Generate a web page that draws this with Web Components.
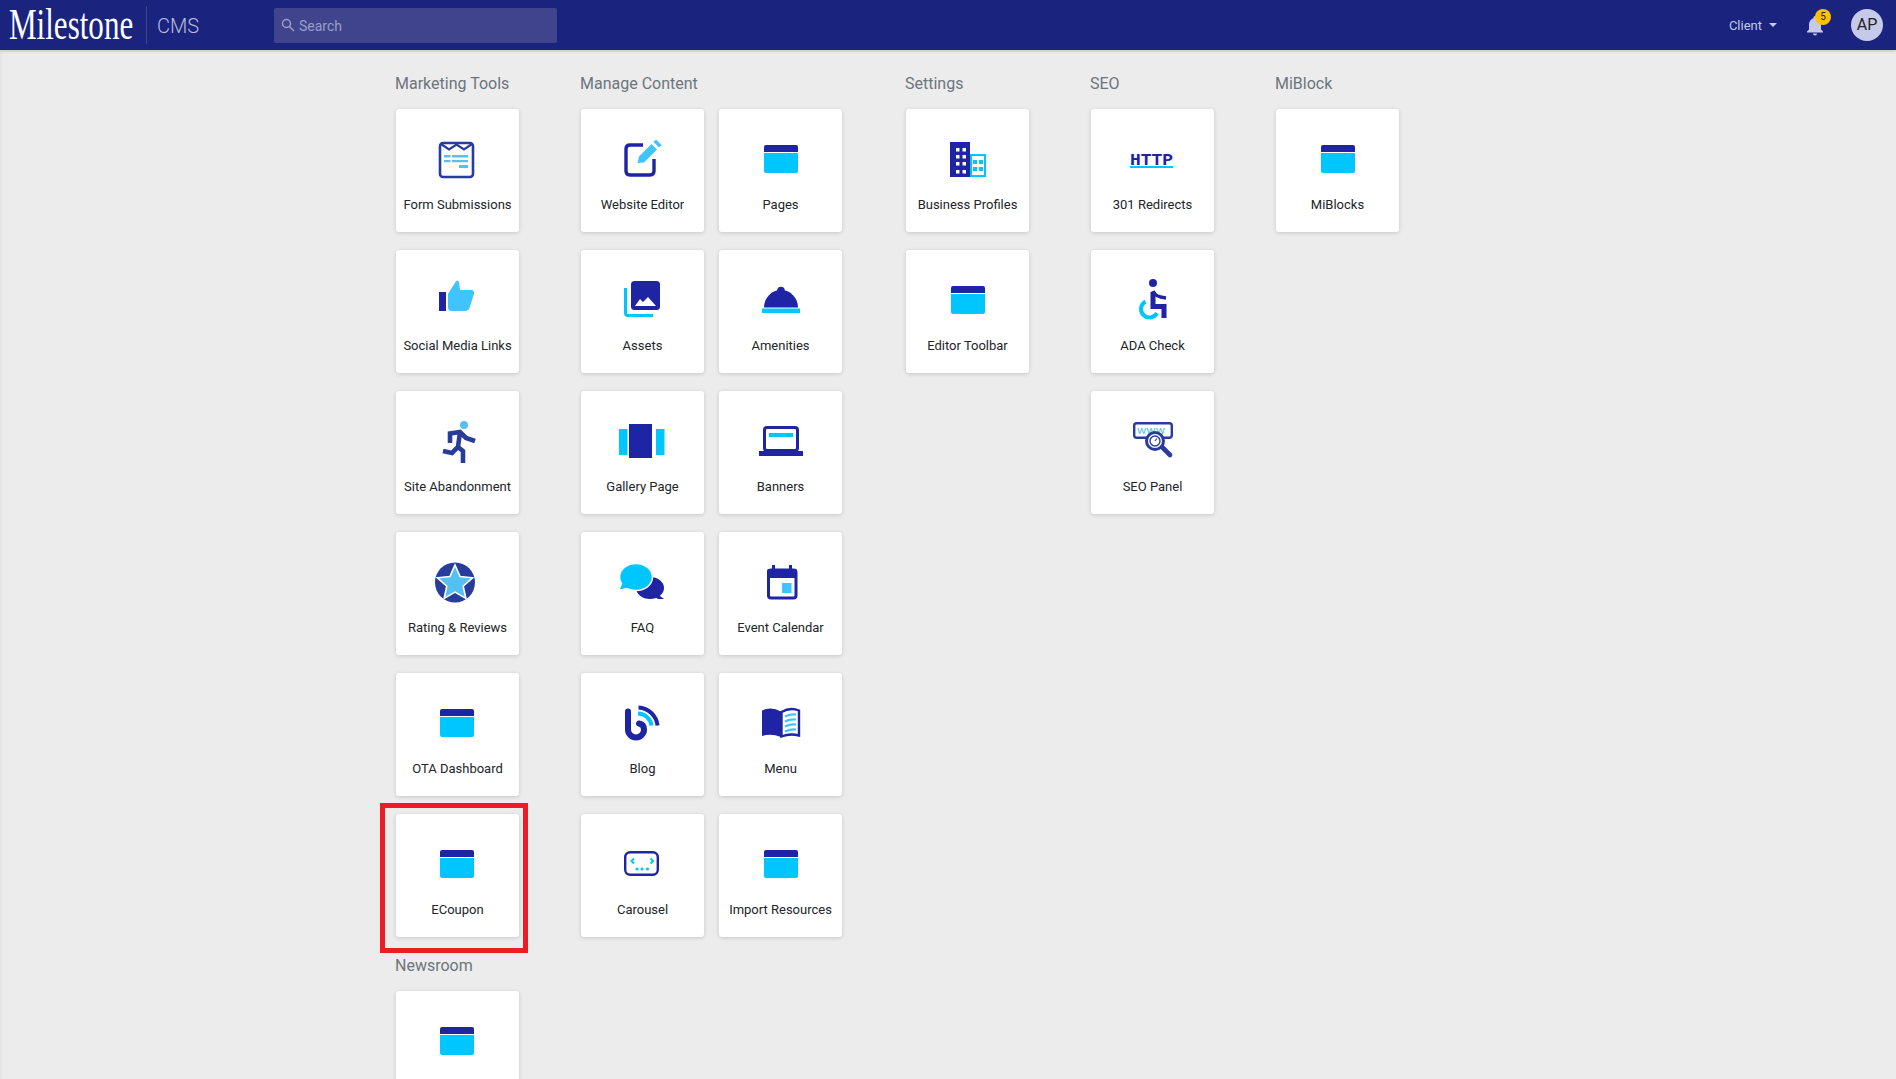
<!DOCTYPE html>
<html lang="en">
<head>
<meta charset="utf-8">
<title>Milestone CMS</title>
<style>
    html, body { margin: 0; height: 100%; overflow: hidden; background: #ececec; }
    body { font-family: Roboto, "Liberation Sans", sans-serif; }
</style>
</head>
<body>
<app-header></app-header>
<app-main>
    <menu-column>
        <menu-group title="Marketing Tools">
            <menu-card label="Form Submissions" icon="form"></menu-card>
            <menu-card label="Social Media Links" icon="thumb"></menu-card>
            <menu-card label="Site Abandonment" icon="runner"></menu-card>
            <menu-card label="Rating &amp; Reviews" icon="star"></menu-card>
            <menu-card label="OTA Dashboard" icon="windowLeft"></menu-card>
            <menu-card label="ECoupon" icon="windowLeft" highlight></menu-card>
        </menu-group>
        <menu-group title="Newsroom">
            <menu-card icon="windowLeft"></menu-card>
        </menu-group>
    </menu-column>
    <menu-column wide>
        <menu-group title="Manage Content" cols="2">
            <menu-card label="Website Editor" icon="editor"></menu-card>
            <menu-card label="Pages" icon="window"></menu-card>
            <menu-card label="Assets" icon="assets"></menu-card>
            <menu-card label="Amenities" icon="dome"></menu-card>
            <menu-card label="Gallery Page" icon="gallery"></menu-card>
            <menu-card label="Banners" icon="laptop"></menu-card>
            <menu-card label="FAQ" icon="faq"></menu-card>
            <menu-card label="Event Calendar" icon="calendar"></menu-card>
            <menu-card label="Blog" icon="blog"></menu-card>
            <menu-card label="Menu" icon="book"></menu-card>
            <menu-card label="Carousel" icon="carousel"></menu-card>
            <menu-card label="Import Resources" icon="window"></menu-card>
        </menu-group>
    </menu-column>
    <menu-column>
        <menu-group title="Settings">
            <menu-card label="Business Profiles" icon="building"></menu-card>
            <menu-card label="Editor Toolbar" icon="window"></menu-card>
        </menu-group>
    </menu-column>
    <menu-column>
        <menu-group title="SEO">
            <menu-card label="301 Redirects" icon="http"></menu-card>
            <menu-card label="ADA Check" icon="ada"></menu-card>
            <menu-card label="SEO Panel" icon="seo"></menu-card>
        </menu-group>
    </menu-column>
    <menu-column>
        <menu-group title="MiBlock">
            <menu-card label="MiBlocks" icon="window"></menu-card>
        </menu-group>
    </menu-column>
</app-main>

<script>
const DARK = '#1e24a3';
const NAVY = '#283c9e';
const CYAN = '#00c6ff';
const SKY = '#40c4ff';
const PALE = '#55c1f2';

const windowIcon = x => `
    <path d="M${x} 22v-5a2 2 0 0 1 2-2h30a2 2 0 0 1 2 2v5z" fill="${DARK}"/>
    <path d="M${x} 23h34v18a2 2 0 0 1-2 2h-30a2 2 0 0 1-2-2z" fill="${CYAN}"/>`;

const starPoints = () => {
    const pts = [];
    for (let i = 0; i < 10; i++) {
        const r = i % 2 ? 8.6 : 18.5;
        const a = -Math.PI / 2 + i * Math.PI / 5;
        pts.push((28 + r * Math.cos(a)).toFixed(1) + ',' + (30.5 + r * Math.sin(a)).toFixed(1));
    }
    return pts.join(' ');
};

// icons are drawn on a 61x60 box, which sits centred at the top of the card
const ICONS = {
    window: windowIcon(14),
    windowLeft: windowIcon(13),
    form: `
        <rect x="13" y="13" width="33" height="34" rx="3" fill="#fff" stroke="${NAVY}" stroke-width="2.6"/>
        <path d="M14 14l8 5.5 7.5-5 7.5 5 8-5.5" fill="none" stroke="${NAVY}" stroke-width="2.2"/>
        <path d="M17 25h6.500v2.600h-6.500zM25 25h16v2.600h-16zM17 30h6.500v2.300h-6.500zM25 30h16v2.300h-16zM32 35h9v3h-9z" fill="${PALE}"/>`,
    thumb: `
        <rect x="12" y="21" width="7" height="19" fill="${DARK}"/>
        <path d="M21 23L28.500 11Q30.500 8 32 11L33 19H44Q47.500 19 47 23L42.500 37Q41.500 40 38 40H25Q21 40 21 36Z" fill="${SKY}"/>`,
    runner: `
        <circle cx="37" cy="13" r="4" fill="${PALE}"/>
        <path d="M23 31V21.500L33 20L39 26L48 29M33 20L31 35L25 41L16 39M31 35L36 39V51" fill="none" stroke="${NAVY}" stroke-width="4.6" stroke-linejoin="miter"/>`,
    star: `
        <circle cx="28" cy="29.500" r="20" fill="${NAVY}"/>
        <polygon points="${starPoints()}" fill="${PALE}" stroke="#fff" stroke-width="1.600"/>`,
    editor: `
        <path d="M31 15H18Q14 15 14 19V41Q14 45 18 45H38Q42 45 42 41V29" fill="none" stroke="${DARK}" stroke-width="3.400"/>
        <path d="M25.500 33L27 26.500L39.500 14L45 19.500L32 32.500Z" fill="${SKY}"/>
        <path d="M41.500 12L44 9.500L49.500 15L47 17.500Z" fill="${SKY}"/>`,
    assets: `
        <rect x="19" y="10" width="29" height="29" rx="3.500" fill="${DARK}"/>
        <path d="M23 35L28 28L31 31L36 26L44 35Z" fill="#fff"/>
        <path d="M13.500 17V42Q13.500 44.500 16 44.500H41" fill="none" stroke="${CYAN}" stroke-width="3"/>`,
    dome: `
        <circle cx="31" cy="19.500" r="3.800" fill="${DARK}"/>
        <path d="M14 36.500a17 17.500 0 0 1 34 0z" fill="${DARK}"/>
        <rect x="12" y="37.500" width="38" height="4.500" fill="${CYAN}"/>`,
    gallery: `
        <rect x="17" y="12" width="23" height="34" fill="${DARK}"/>
        <rect x="7" y="17" width="8.500" height="26" fill="${CYAN}"/>
        <rect x="44" y="17" width="8.500" height="26" fill="${CYAN}"/>`,
    laptop: `
        <rect x="14.500" y="15.500" width="33" height="23" rx="2.500" fill="none" stroke="${DARK}" stroke-width="3"/>
        <rect x="9" y="39" width="44" height="5" fill="${DARK}"/>
        <rect x="19" y="21" width="24" height="4" fill="${CYAN}"/>`,
    faq: `
        <ellipse cx="38" cy="35" rx="14" ry="11" fill="${DARK}"/>
        <path d="M44 40L52 46L46 46L40 42Z" fill="${DARK}"/>
        <path d="M8 36L12 31L18 34Z" fill="${CYAN}"/>
        <ellipse cx="24" cy="24" rx="16.500" ry="13.500" fill="${CYAN}" stroke="#fff" stroke-width="1.500"/>
        <path d="M8 36L11 29L17 34.500Z" fill="${CYAN}"/>`,
    calendar: `
        <rect x="18.500" y="17" width="27.500" height="28" rx="2.500" fill="#fff" stroke="${DARK}" stroke-width="3"/>
        <rect x="17" y="16" width="30" height="9" rx="2" fill="${DARK}"/>
        <rect x="22" y="12" width="3" height="5" fill="${DARK}"/>
        <rect x="39" y="12" width="3" height="5" fill="${DARK}"/>
        <rect x="32" y="30" width="9.500" height="10" fill="${SKY}"/>`,
    blog: `
        <g transform="translate(0 -1.500)">
        <path d="M16 19V37A8 8 0 0 0 32 37C32 33.500 30 31.500 27 31" fill="none" stroke="${DARK}" stroke-width="6" stroke-linecap="round"/>
        <path d="M26 21A14 14 0 0 1 39.500 33" fill="none" stroke="${CYAN}" stroke-width="4"/>
        <path d="M26.500 15A20 20 0 0 1 45.500 33" fill="none" stroke="${DARK}" stroke-width="4"/>
        </g>`,
    book: `
        <path d="M12 16.500Q21 12 31 17.500V43Q21 39 12 42Z" fill="${DARK}"/>
        <path d="M31.500 18Q40 13 49 16.500V41.500Q40 39 31.500 42.500Z" fill="#fff" stroke="${DARK}" stroke-width="2.400"/>
        <path d="M35 22.500Q40 20 46 20.500M35 27.500Q40 25 46 25.500M35 32.500Q40 30 46 30.500M35 37.500Q40 35 46 35.500" fill="none" stroke="${SKY}" stroke-width="2.200"/>`,
    carousel: `
        <rect x="13.200" y="17.200" width="32.600" height="22.600" rx="5" fill="none" stroke="${DARK}" stroke-width="2.400"/>
        <path d="M22 23.500L19.500 26L22 28.500M38.500 23.500L41 26L38.500 28.500" fill="none" stroke="${CYAN}" stroke-width="2"/>
        <circle cx="25" cy="34" r="1.600" fill="${CYAN}"/>
        <circle cx="30" cy="34" r="1.600" fill="${CYAN}"/>
        <circle cx="35.500" cy="34" r="1.600" fill="${CYAN}"/>`,
    building: `
        <rect x="34" y="25" width="14" height="21" fill="#fff" stroke="${CYAN}" stroke-width="2"/>
        <path d="M36 30h4v4h-4zM42 30h4v4h-4zM36 37h4v4h-4zM42 37h4v4h-4z" fill="${CYAN}"/>
        <rect x="13" y="12" width="20" height="35" fill="${DARK}"/>
        <path d="M19 18h3.500v3.500h-3.500zM25.500 18h3.500v3.500h-3.500zM19 25h3.500v3.500h-3.500zM25.500 25h3.500v3.500h-3.500zM19 32h3.500v3.500h-3.500zM25.500 32h3.500v3.500h-3.500zM19 40h3.500v3.500h-3.500zM25.500 40h3.500v3.500h-3.500z" fill="#fff"/>`,
    http: `
        <text x="8" y="35" font-family="'Liberation Mono', monospace" font-weight="700" font-size="17" textLength="43" lengthAdjust="spacingAndGlyphs" fill="${DARK}">HTTP</text>
        <rect x="8" y="36" width="43" height="2" fill="${CYAN}"/>`,
    ada: `
        <circle cx="31" cy="12" r="4" fill="${DARK}"/>
        <path d="M23.500 30.500A8.500 8.500 0 1 0 35 42" fill="none" stroke="${CYAN}" stroke-width="4"/>
        <path d="M31 21V35.500H42V47" fill="none" stroke="${DARK}" stroke-width="5"/>
        <path d="M31 20Q33 26 44 27" fill="none" stroke="${DARK}" stroke-width="3.500"/>`,
    seo: `
        <rect x="12.200" y="11.200" width="37.600" height="14.600" rx="2.500" fill="#fff" stroke="${NAVY}" stroke-width="2.400"/>
        <text x="15" y="21.500" font-family="Roboto, sans-serif" font-size="10" textLength="28" lengthAdjust="spacingAndGlyphs" fill="${PALE}">www</text>
        <path d="M40 35L48 43" stroke="${NAVY}" stroke-width="4.600" stroke-linecap="round"/>
        <circle cx="33" cy="29" r="8.500" fill="#fff" stroke="${NAVY}" stroke-width="3"/>
        <circle cx="33" cy="29" r="5" fill="#fff" stroke="${NAVY}" stroke-width="1.400"/>
        <path d="M33 29L35 26.500" stroke="${NAVY}" stroke-width="1.200"/>`
};

class AppHeader extends HTMLElement {
    constructor() {
        super();
        this.attachShadow({ mode: 'open' });
        this.shadowRoot.innerHTML = `
            <style>
                :host {
                    display: flex;
                    align-items: center;
                    position: relative;
                    z-index: 1;
                    height: 50px;
                    padding: 0 13px 0 9px;
                    background: #1a237e;
                    box-shadow: 0 1px 3px rgba(0,0,0,.2);
                    color: #c5cae9;
                    font-family: Roboto, "Liberation Sans", sans-serif;
                }
                .brand { display: flex; align-items: center; width: 265px; height: 100%; flex: none; }
                .logo {
                    width: 137px;
                    flex: none;
                    font: 45px/50px "Liberation Serif", serif;
                    color: #fff;
                    transform: scaleX(.69);
                    transform-origin: left center;
                    white-space: nowrap;
                    position: relative;
                    top: -1px;
                }
                .divider { width: 1px; height: 38px; background: #3f4690; flex: none; }
                .cms { margin: 2px 0 0 10px; font-size: 20px; font-weight: 300; color: #b9bddb; }
                .search {
                    display: flex;
                    align-items: center;
                    gap: 4px;
                    width: 283px;
                    height: 35px;
                    box-sizing: border-box;
                    padding: 0 7px;
                    border-radius: 2px;
                    background: #3f448c;
                    color: #9a9dc8;
                    font-size: 14px;
                }
                .search svg { flex: none; }
                .search span { margin-top: 2px; }
                .right { margin-left: auto; display: flex; align-items: center; }
                .client { font-size: 13px; }
                .caret {
                    margin: 0 28px 0 7px;
                    border-left: 4px solid transparent;
                    border-right: 4px solid transparent;
                    border-top: 4px solid #c5cae9;
                }
                .bell { position: relative; width: 20px; height: 20px; margin-right: 26px; margin-top: 2px; }
                .bell svg { display: block; }
                .badge {
                    position: absolute;
                    left: 10px;
                    top: -7px;
                    width: 16px;
                    height: 16px;
                    border-radius: 50%;
                    background: #ffc107;
                    color: #222;
                    font-size: 10px;
                    line-height: 16px;
                    text-align: center;
                }
                .avatar {
                    width: 32px;
                    height: 32px;
                    border-radius: 50%;
                    background: #c5cae9;
                    color: #222;
                    font-size: 16px;
                    line-height: 32px;
                    text-align: center;
                }
            </style>
            <div class="brand">
                <div class="logo">Milestone</div>
                <div class="divider"></div>
                <div class="cms">CMS</div>
            </div>
            <div class="search">
                <svg width="14" height="14" viewBox="0 0 14 14"><circle cx="5.500" cy="5.500" r="4" fill="none" stroke="#9a9dc8" stroke-width="1.500"/><path d="M8.500 8.500L13 13" stroke="#9a9dc8" stroke-width="1.500"/></svg>
                <span>Search</span>
            </div>
            <div class="right">
                <span class="client">Client</span>
                <span class="caret"></span>
                <div class="bell">
                    <svg width="20" height="20" viewBox="0 0 20 20"><path d="M2 15.500L4 13.500V8.500C4 5.300 6 3 8.500 2.300V1.500A1.500 1.500 0 0 1 11.500 1.500V2.300C14 3 16 5.300 16 8.500V13.500L18 15.500V16.500H2Z" fill="#c5cae9"/><path d="M8 17.500h4a2 2 0 0 1-4 0z" fill="#c5cae9"/></svg>
                    <span class="badge">5</span>
                </div>
                <div class="avatar">AP</div>
            </div>
        `;
    }
}

class AppMain extends HTMLElement {
    constructor() {
        super();
        this.attachShadow({ mode: 'open' });
        this.shadowRoot.innerHTML = `
            <style>
                :host {
                    display: flex;
                    align-items: flex-start;
                    gap: 62px;
                    padding: 24px 0 0 394px;
                    border-left: 2px solid #e3e7ea;
                }
            </style>
            <slot></slot>
        `;
    }
}

class MenuColumn extends HTMLElement {
    constructor() {
        super();
        this.attachShadow({ mode: 'open' });
        this.shadowRoot.innerHTML = `
            <style>
                :host { display: flex; flex-direction: column; gap: 19px; }
                :host([wide]) { margin-right: 2px; }
            </style>
            <slot></slot>
        `;
    }
}

class MenuGroup extends HTMLElement {
    constructor() {
        super();
        this.attachShadow({ mode: 'open' });
        const cols = parseInt(this.getAttribute('cols')) || 1;
        this.shadowRoot.innerHTML = `
            <style>
                :host { display: block; font-family: Roboto, "Liberation Sans", sans-serif; }
                h2 {
                    margin: 0 0 15px -1px;
                    font-size: 16px;
                    font-weight: 400;
                    line-height: 20px;
                    color: #6c757d;
                }
                .grid {
                    display: grid;
                    grid-template-columns: repeat(${cols}, 123px);
                    column-gap: 15px;
                    row-gap: 18px;
                }
            </style>
            <h2>${this.getAttribute('title')}</h2>
            <div class="grid"><slot></slot></div>
        `;
    }
}

class MenuCard extends HTMLElement {
    constructor() {
        super();
        this.attachShadow({ mode: 'open' });
        const icon = ICONS[this.getAttribute('icon')] || '';
        const label = (this.getAttribute('label') || '').replace('&', '&amp;');
        this.shadowRoot.innerHTML = `
            <style>
                :host {
                    display: flex;
                    flex-direction: column;
                    align-items: center;
                    position: relative;
                    box-sizing: border-box;
                    width: 123px;
                    height: 123px;
                    padding-top: 21px;
                    border-radius: 3px;
                    background: #fff;
                    box-shadow: 0 1px 4px rgba(0,0,0,.16);
                    font-family: Roboto, "Liberation Sans", sans-serif;
                }
                svg { display: block; flex: none; }
                .label {
                    margin-top: 7px;
                    font-size: 13px;
                    line-height: 16px;
                    color: #212529;
                    white-space: nowrap;
                }
                :host([highlight])::after {
                    content: "";
                    position: absolute;
                    left: -16px;
                    right: -9px;
                    top: -11px;
                    bottom: -16px;
                    border: 5px solid #ed1c24;
                    pointer-events: none;
                }
            </style>
            <svg width="61" height="60" viewBox="0 0 61 60">${icon}</svg>
            <span class="label">${label}</span>
        `;
    }
}

customElements.define('app-header', AppHeader);
customElements.define('app-main', AppMain);
customElements.define('menu-column', MenuColumn);
customElements.define('menu-group', MenuGroup);
customElements.define('menu-card', MenuCard);
</script>
</body>
</html>
